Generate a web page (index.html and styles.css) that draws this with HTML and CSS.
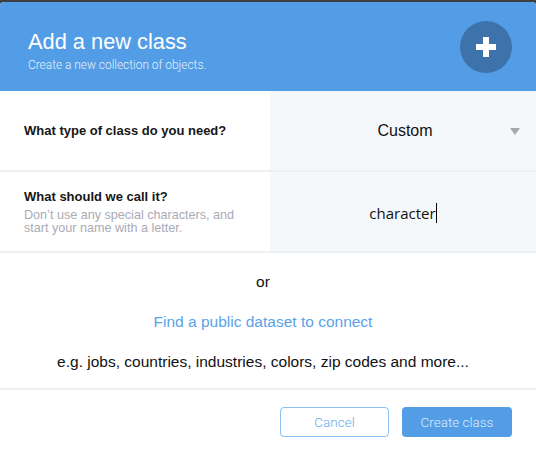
FILE: index.html
```html
<!DOCTYPE html>
<html>
<head>
<meta charset="utf-8">
<link rel="stylesheet" href="styles.css">
</head>
<body>
<div class="screen">
  <div class="modal">
    <div class="header">
      <div class="titles">
        <div class="title">Add a new class</div>
        <div class="subtitle">Create a new collection of objects.</div>
      </div>
      <div class="add-btn">
        <svg width="20" height="20" viewBox="0 0 20 20"><rect x="7" y="0" width="6" height="20" fill="#fff"/><rect x="0" y="7" width="20" height="6" fill="#fff"/></svg>
      </div>
    </div>
    <div class="row">
      <div class="label-cell">
        <div class="label">What type of class do you need?</div>
      </div>
      <div class="field-cell">
        <span class="select-value">Custom</span>
        <span class="caret"></span>
      </div>
    </div>
    <div class="row">
      <div class="label-cell">
        <div class="label">What should we call it?</div>
        <div class="help">Don’t use any special characters, and<br>start your name with a letter.</div>
      </div>
      <div class="field-cell">
        <span class="input-value">character</span><span class="cursor"></span>
      </div>
    </div>
    <div class="alt">
      <div class="alt-line">or</div>
      <div class="alt-line link">Find a public dataset to connect</div>
      <div class="alt-line">e.g. jobs, countries, industries, colors, zip codes and more...</div>
    </div>
    <div class="footer">
      <div class="btn btn-outline">Cancel</div>
      <div class="btn btn-primary">Create class</div>
    </div>
  </div>
</div>
</body>
</html>
```
FILE: styles.css
```css
html, body {
  margin: 0;
  padding: 0;
}
body {
  width: 536px;
  height: 454px;
  overflow: hidden;
  font-family: "Liberation Sans", Arial, sans-serif;
}
.screen {
  background: #3f3f3f;
  padding-top: 2px;
  height: 454px;
  box-sizing: border-box;
}
.modal {
  background: #fff;
  border-radius: 4px 4px 0 0;
  overflow: hidden;
  height: 452px;
}
.header {
  height: 89px;
  background: #539de6;
  display: flex;
  align-items: center;
  justify-content: space-between;
  padding: 0 24px 0 28px;
}
.titles {
  margin-top: 9px;
}
.title {
  color: #fff;
  font-size: 21.8px;
  line-height: 24px;
}
.subtitle {
  color: #e6f0fb;
  font-family: Roboto, "Liberation Sans", sans-serif;
  font-weight: 300;
  font-size: 11.9px;
  line-height: 16px;
  margin-top: 3px;
}
.add-btn {
  width: 52px;
  height: 52px;
  border-radius: 50%;
  background: #3d72aa;
  display: flex;
  align-items: center;
  justify-content: center;
}
.add-btn svg {
  display: block;
}
.row {
  display: flex;
  height: 79px;
  border-bottom: 2px solid #eef0f2;
}
.label-cell {
  width: 270px;
  box-sizing: border-box;
  padding-left: 24px;
  display: flex;
  flex-direction: column;
  justify-content: center;
}
.label {
  font-weight: bold;
  font-size: 13px;
  line-height: 16px;
  color: #161616;
}
.help {
  color: #a9abb6;
  font-size: 12.6px;
  line-height: 13px;
  margin-top: 4px;
}
.field-cell {
  flex: 1;
  background: #f5f8fa;
  display: flex;
  align-items: center;
  justify-content: center;
  position: relative;
}
.select-value {
  font-size: 16px;
  color: #111;
  margin-left: 4px;
}
.caret {
  position: absolute;
  right: 16px;
  top: 37px;
  width: 0;
  height: 0;
  border-left: 5.5px solid transparent;
  border-right: 5.5px solid transparent;
  border-top: 7px solid #a8a8a8;
}
.input-value {
  font-family: "Open Sans", sans-serif;
  font-size: 15px;
  color: #111;
  margin-top: 3px;
}
.cursor {
  display: inline-block;
  width: 1px;
  height: 20px;
  background: #000;
  margin-top: 3px;
}
.alt {
  padding: 9px 10px 6px 0;
  border-bottom: 2px solid #eef0f2;
  text-align: center;
}
.alt-line {
  font-size: 15.5px;
  line-height: 40px;
  color: #111;
}
.alt-line.link {
  color: #5aa3e8;
}
.footer {
  display: flex;
  justify-content: flex-end;
  gap: 13px;
  padding: 17px 24px 0 0;
}
.btn {
  height: 30px;
  box-sizing: border-box;
  border-radius: 4px;
  display: flex;
  align-items: center;
  justify-content: center;
  font-family: Roboto, "Liberation Sans", sans-serif;
  font-weight: 300;
  font-size: 13.5px;
}
.btn-outline {
  width: 109px;
  border: 1px solid #8cc0f0;
  color: #6aaae8;
  background: #fff;
}
.btn-primary {
  width: 110px;
  background: #539de6;
  color: #dcebfb;
}
```
